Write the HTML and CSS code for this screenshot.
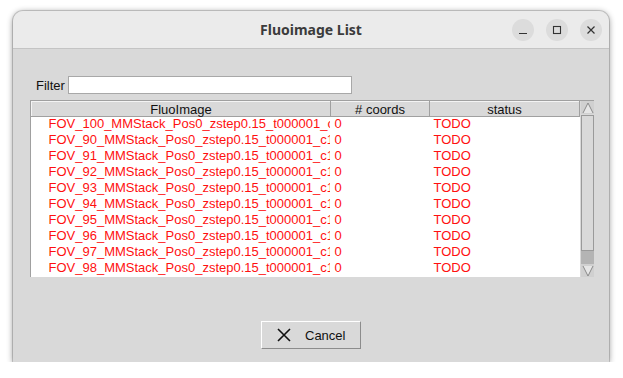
FILE: index.html
```html
<!DOCTYPE html>
<html lang="en">
<head>
    <meta charset="UTF-8">
    <title>Fluoimage List</title>
    <link rel="stylesheet" href="styles.css">
</head>
<body>
    <div class="window">
        <div class="titlebar">
            <span class="title">Fluoimage List</span>
            <div class="controls">
                <span class="ctl"><svg width="10" height="10" viewBox="0 0 10 10"><path d="M1 8.5h8" stroke="#333" stroke-width="1.2"/></svg></span>
                <span class="ctl"><svg width="10" height="10" viewBox="0 0 10 10"><rect x="1.5" y="1.5" width="7" height="7" fill="none" stroke="#333" stroke-width="1.1"/></svg></span>
                <span class="ctl"><svg width="10" height="10" viewBox="0 0 10 10"><path d="M1.5 1.5l7 7M8.5 1.5l-7 7" stroke="#333" stroke-width="1.2"/></svg></span>
            </div>
        </div>
        <div class="content">
            <div class="filter">
                <label>Filter</label>
                <input type="text" class="filter-input">
            </div>
            <div class="table-box">
                <div class="table-wrap">
                    <table>
                        <thead>
                            <tr>
                                <th class="c1">FluoImage</th>
                                <th class="c2"># coords</th>
                                <th class="c3">status</th>
                            </tr>
                        </thead>
                        <tbody id="rows"></tbody>
                    </table>
                </div>
                <div class="scrollbar">
                    <div class="arrow up"><svg width="12" height="12" viewBox="0 0 12 12"><path d="M1 11L6 1l5 10" fill="#e6e6e6" stroke="#8a8a8a"/></svg></div>
                    <div class="thumb"></div>
                    <div class="track"></div>
                    <div class="arrow down"><svg width="12" height="12" viewBox="0 0 12 12"><path d="M1 1l5 10 5-10" fill="#e6e6e6" stroke="#8a8a8a"/></svg></div>
                </div>
            </div>
            <div class="buttons">
                <button class="cancel">
                    <svg width="14" height="14" viewBox="0 0 14 14"><path d="M1 1l12 12M13 1L1 13" stroke="#111" stroke-width="1.6"/></svg>
                    <span>Cancel</span>
                </button>
            </div>
        </div>
    </div>

    <script>
        const names = ['100', '90', '91', '92', '93', '94', '95', '96', '97', '98'];
        const tbody = document.querySelector('#rows');
        names.forEach(n => {
            const row = document.createElement('tr');
            row.innerHTML = `
                <td class="c1"><div class="clip">FOV_${n}_MMStack_Pos0_zstep0.15_t000001_c1</div></td>
                <td class="c2">0</td>
                <td class="c3">TODO</td>
            `;
            tbody.appendChild(row);
        });
    </script>
</body>
</html>
```

FILE: styles.css
```css
body {
    margin: 0;
    padding: 0;
    background: #ffffff;
    font-family: "Liberation Sans", Arial, sans-serif;
}

.window {
    margin: 11px 0 0 13px;
    width: 596px;
    height: 351px;
    background: #d9d9d9;
    border-radius: 10px 10px 0 0;
    box-shadow: 0 1px 6px rgba(0, 0, 0, 0.45), 0 0 0 1px rgba(0, 0, 0, 0.15);
    overflow: hidden;
    display: flex;
    flex-direction: column;
}

.titlebar {
    height: 37px;
    background: #ebebeb;
    border-bottom: 1px solid #c4c4c4;
    display: flex;
    align-items: center;
    justify-content: center;
    position: relative;
}

.title {
    font-family: "Noto Sans", "DejaVu Sans", sans-serif;
    font-weight: bold;
    font-size: 14px;
    color: #3b3b3b;
}

.controls {
    position: absolute;
    right: 7px;
    top: 8px;
    display: flex;
    gap: 12px;
}

.ctl {
    width: 22px;
    height: 22px;
    border-radius: 50%;
    background: #dcdcdc;
    display: flex;
    align-items: center;
    justify-content: center;
}

.content {
    flex: 1;
    padding: 27px 15px 0 17px;
    display: flex;
    flex-direction: column;
}

.filter {
    display: flex;
    align-items: center;
    margin-left: 6px;
    height: 18px;
}

.filter label {
    font-size: 13px;
    color: #111;
    margin-right: 3px;
}

.filter-input {
    width: 280px;
    height: 14px;
    border: 1px solid #a8a8a8;
    background: #fff;
    padding: 1px;
    margin: 0;
}

.table-box {
    margin-top: 6px;
    width: 564px;
    height: 177px;
    display: flex;
    border-top: 1px solid #a0a0a0;
    border-left: 1px solid #a0a0a0;
    box-sizing: border-box;
}

.table-wrap {
    flex: 1;
    background: #fff;
    overflow: hidden;
}

table {
    border-collapse: collapse;
    table-layout: fixed;
    width: 549px;
    font-size: 13px;
}

th {
    height: 14px;
    padding: 0;
    font-weight: normal;
    color: #111;
    background: #d9d9d9;
    border-top: 1px solid #f4f4f4;
    border-left: 1px solid #f4f4f4;
    border-right: 1px solid #a0a0a0;
    border-bottom: 1px solid #a0a0a0;
    text-align: center;
    line-height: 13px;
}

th.c1 { width: 298px; }
th.c2 { width: 98px; }

td {
    height: 16px;
    padding: 0;
    color: #ff1010;
    line-height: 13px;
    vertical-align: top;
    white-space: nowrap;
}

td.c1 { padding-left: 17px; }
td.c2 { padding-left: 4px; }
td.c3 { padding-left: 4px; }

.clip {
    width: 281px;
    height: 16px;
    overflow: hidden;
}

.scrollbar {
    width: 13px;
    display: flex;
    flex-direction: column;
    background: #d9d9d9;
    margin-left: 1px;
}

.arrow {
    height: 13px;
    display: flex;
    align-items: center;
    justify-content: center;
    background: #d0d0d0;
}

.thumb {
    height: 136px;
    margin-top: 1px;
    background: #d9d9d9;
    border: 1px solid #9a9a9a;
    box-sizing: border-box;
}

.track {
    flex: 1;
    background: #b4b4b4;
}

.buttons {
    display: flex;
    justify-content: center;
    margin-top: 44px;
    padding-right: 2px;
}

.cancel {
    width: 100px;
    height: 28px;
    display: flex;
    align-items: center;
    padding: 0 0 0 15px;
    gap: 14px;
    background: #d9d9d9;
    border-top: 1px solid #ffffff;
    border-left: 1px solid #ffffff;
    border-right: 1px solid #8c8c8c;
    border-bottom: 1px solid #8c8c8c;
    font-family: "Liberation Sans", Arial, sans-serif;
    font-size: 13px;
    color: #111;
}
```
